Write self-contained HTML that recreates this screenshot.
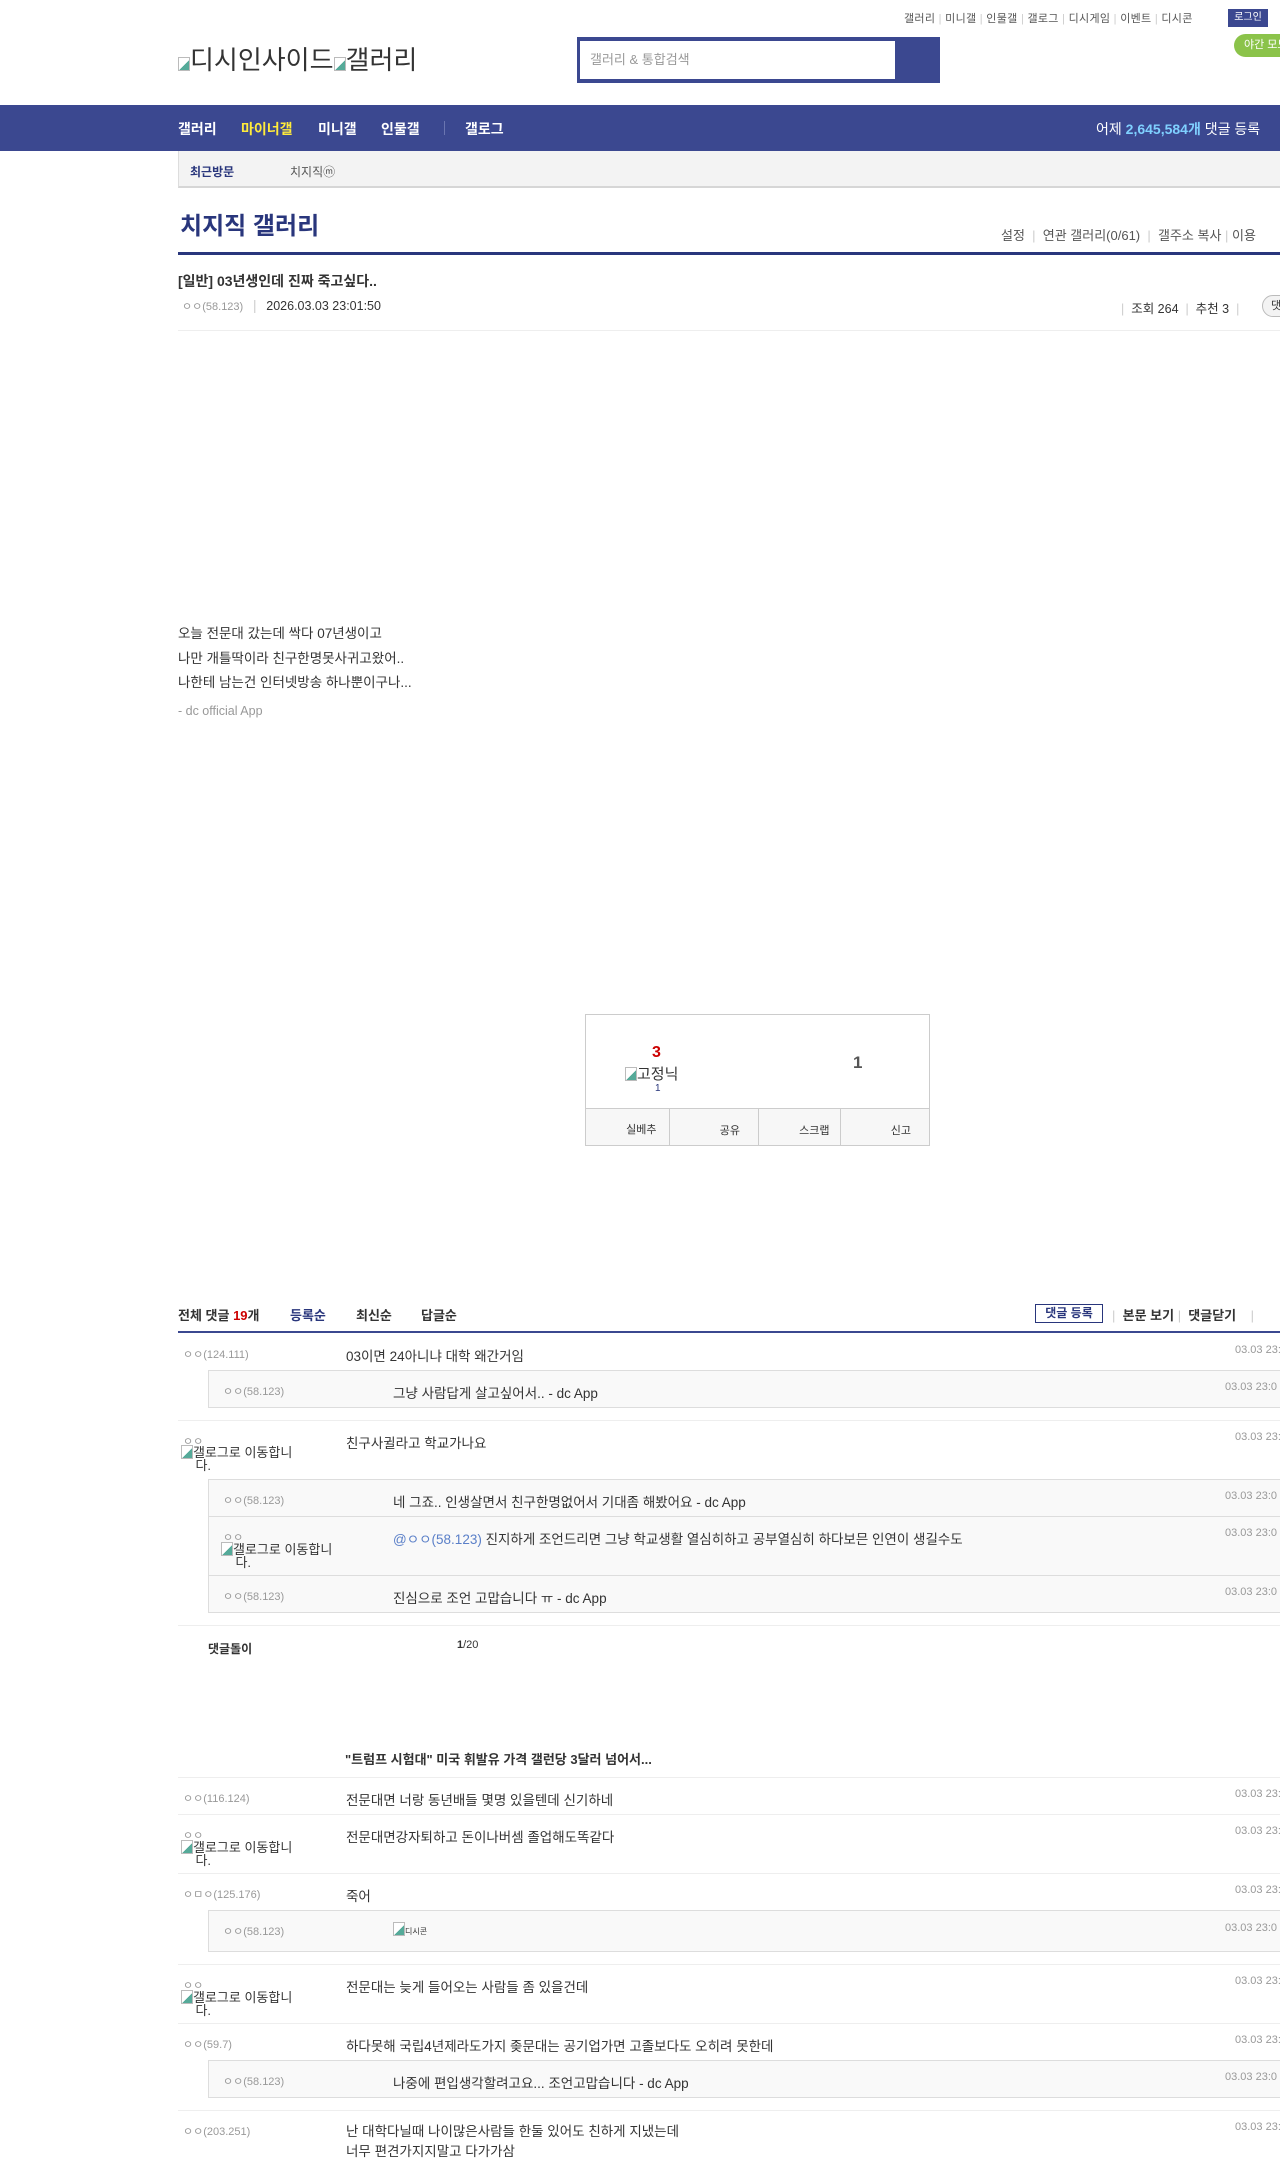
<!DOCTYPE html>
<html><head><meta charset="utf-8"><style>
*{margin:0;padding:0;box-sizing:border-box}
body{width:1280px;height:2158px;overflow:hidden;position:relative;background:#fff;font-family:"Liberation Sans","Noto Sans CJK KR",sans-serif;color:#333;font-size:13.5px}
.a{position:absolute;white-space:nowrap}
.g{color:#999;font-size:11px}
.d{color:#999;font-size:11px}
.ln{position:absolute;left:178px;width:1200px;height:1px;background:#eee}
.rb{position:absolute;left:208px;width:1170px;background:#f9f9f9;border:1px solid #ddd}
.bi{display:inline-block;width:12px;height:14px;border:1px solid #bbb;vertical-align:-2px;background:linear-gradient(135deg,#fff 55%,#5a9 56%)}
</style></head><body>
<div class="a" style="top:10px;left:904px;font-size:11px;color:#555;letter-spacing:0.3px">갤러리 <span style="color:#ccc">|</span> 미니갤 <span style="color:#ccc">|</span> 인물갤 <span style="color:#ccc">|</span> 갤로그 <span style="color:#ccc">|</span> 디시게임 <span style="color:#ccc">|</span> 이벤트 <span style="color:#ccc">|</span> 디시콘</div>
<div class="a" style="top:9px;left:1228px;width:40px;height:18px;background:#3b4890;color:#fff;font-size:10px;text-align:center;line-height:18px">로그인</div>
<div class="a" style="top:34px;left:1234px;width:60px;height:23px;background:#8bc34a;border-radius:12px;color:#fff;font-size:11px;line-height:23px;padding-left:10px">야간 모드</div>
<div class="a" style="top:40px;left:178px;font-size:26px;color:#333"><span class="bi"></span>디시인사이드<span class="bi"></span>갤러리</div>
<div class="a" style="top:37px;left:577px;width:363px;height:46px;background:#3b4890"></div>
<div class="a" style="top:41px;left:580px;width:315px;height:38px;background:#fff;color:#999;font-size:13px;line-height:38px;padding-left:10px">갤러리 &amp; 통합검색</div>
<div class="a" style="top:105px;left:0;width:1280px;height:46px;background:#3b4890"></div>
<div class="a" style="top:119px;left:178px;font-size:14px;font-weight:bold;color:#fff">갤러리</div>
<div class="a" style="top:119px;left:241px;font-size:14px;font-weight:bold;color:#ffeb3b">마이너갤</div>
<div class="a" style="top:119px;left:318px;font-size:14px;font-weight:bold;color:#fff">미니갤</div>
<div class="a" style="top:119px;left:381px;font-size:14px;font-weight:bold;color:#fff">인물갤</div>
<div class="a" style="top:121px;left:444px;width:1px;height:14px;background:#6a75b0"></div>
<div class="a" style="top:119px;left:465px;font-size:14px;font-weight:bold;color:#fff">갤로그</div>
<div class="a" style="top:119px;left:1096px;font-size:14px;color:#fff">어제 <b style="color:#7fd0ff">2,645,584개</b> 댓글 등록</div>
<div class="a" style="top:151px;left:178px;width:1200px;height:37px;background:#f3f3f3;border-bottom:2px solid #d6d6d6;border-left:1px solid #ddd"></div>
<div class="a" style="top:163px;left:190px;font-size:12px;font-weight:bold;color:#29367c">최근방문</div>
<div class="a" style="top:163px;left:290px;font-size:12px;color:#555">치지직ⓜ</div>
<div class="a" style="top:206px;left:180px;font-size:24px;font-weight:bold;color:#29367c">치지직 갤러리</div>
<div class="a" style="top:225px;left:1001px;font-size:13px;color:#555">설정 <span style="color:#ccc">&nbsp;|&nbsp;</span> 연관 갤러리(0/61) <span style="color:#ccc">&nbsp;|&nbsp;</span> 갤주소 복사 <span style="color:#ccc">|</span> 이용</div>
<div class="a" style="top:252px;left:178px;width:1200px;height:3px;background:#29367c"></div>
<div class="a" style="top:271px;left:178px;font-size:14px;font-weight:bold;color:#333">[일반] 03년생인데 진짜 죽고싶다..</div>
<div class="a" style="top:298px;left:182px"><span class="g">ㅇㅇ(58.123)</span> <span style="color:#ccc;margin:0 6px">|</span> <span style="font-size:12.5px">2026.03.03 23:01:50</span></div>
<div class="a" style="top:298px;left:1121px;font-size:12.5px"><span style="color:#ccc">|</span>&nbsp; 조회 264 &nbsp;<span style="color:#ccc">|</span>&nbsp; 추천 3 &nbsp;<span style="color:#ccc">|</span></div>
<div class="a" style="top:295px;left:1262px;width:30px;height:22px;border:1px solid #bbb;border-radius:11px;background:#f3f3f3;font-size:11px;padding-left:8px;line-height:20px">댓</div>
<div class="ln" style="top:330px"></div>
<div class="a" style="top:622px;left:178px;font-size:13.5px;line-height:24.5px">오늘 전문대 갔는데 싹다 07년생이고<br>나만 개틀딱이라 친구한명못사귀고왔어..<br>나한테 남는건 인터넷방송 하나뿐이구나...</div>
<div class="a" style="top:704px;left:178px;font-size:12.5px;color:#999">- dc official App</div>
<div class="a" style="top:1014px;left:585px;width:345px;height:132px;border:1px solid #ccc;background:#fff"></div>
<div class="a" style="top:1044px;left:652px;font-size:16px;font-weight:bold;color:#c00">3</div>
<div class="a" style="top:1063px;left:625px;font-size:15px;color:#333"><span class="bi"></span>고정닉</div>
<div class="a" style="top:1083px;left:655px;font-size:10px;color:#29367c">1</div>
<div class="a" style="top:1053px;left:853px;font-size:17px;font-weight:bold;color:#555">1</div>
<div class="a" style="top:1108px;left:585px;width:345px;height:38px;background:#f7f7f7;border:1px solid #ccc;display:flex">
<div style="flex:1;border-right:1px solid #ccc;font-size:11px;text-align:right;padding:12px 12px 0 0">실베추</div>
<div style="flex:1;border-right:1px solid #ccc;font-size:11px;text-align:right;padding:13px 18px 0 0">공유</div>
<div style="flex:1;border-right:1px solid #ccc;font-size:11px;text-align:right;padding:13px 10px 0 0">스크랩</div>
<div style="flex:1;font-size:11px;text-align:right;padding:13px 18px 0 0">신고</div></div>
<div class="a" style="top:1305px;left:178px;font-size:13px;font-weight:bold">전체 댓글 <span style="color:#c00">19</span>개</div>
<div class="a" style="top:1305px;left:290px;font-size:13px;font-weight:bold;color:#29367c">등록순</div>
<div class="a" style="top:1305px;left:356px;font-size:13px;font-weight:bold">최신순</div>
<div class="a" style="top:1305px;left:421px;font-size:13px;font-weight:bold">답글순</div>
<div class="a" style="top:1304px;left:1035px;width:68px;height:19px;border:1px solid #29367c;font-size:12px;font-weight:bold;color:#29367c;text-align:center;line-height:17px">댓글 등록</div>
<div class="a" style="top:1305px;left:1112px;font-size:13px;font-weight:bold"><span style="color:#ccc;font-weight:normal">|</span>&nbsp; 본문 보기 <span style="color:#ccc;font-weight:normal">|</span>&nbsp; 댓글닫기 &nbsp;&nbsp;&nbsp;<span style="color:#ccc;font-weight:normal">|</span></div>
<div class="a" style="top:1331px;left:178px;width:1200px;height:2px;background:#3b4890"></div>
<div class="a g" style="top:1346px;left:183px">ㅇㅇ(124.111)</div>
<div class="a" style="top:1345px;left:346px">03이면 24아니냐 대학 왜간거임</div>
<div class="a d" style="top:1344px;left:1235px">03.03 23:0</div>
<div class="rb" style="top:1370px;height:38px"></div>
<div class="a g" style="top:1383px;left:223px">ㅇㅇ(58.123)</div>
<div class="a" style="top:1382px;left:393px">그냥 사람답게 살고싶어서.. - dc App</div>
<div class="a d" style="top:1381px;left:1225px">03.03 23:0</div>
<div class="ln" style="top:1420px"></div>
<div class="a g" style="top:1433px;left:183px">ㅇㅇ</div>
<div class="a" style="top:1445px;left:181px;font-size:13px;line-height:13px"><span class="bi"></span>갤로그로 이동합니<br>&nbsp;&nbsp;&nbsp;&nbsp;다.</div>
<div class="a" style="top:1432px;left:346px">친구사귈라고 학교가나요</div>
<div class="a d" style="top:1431px;left:1235px">03.03 23:0</div>
<div class="rb" style="top:1479px;height:134px"></div>
<div class="a" style="top:1516px;left:209px;width:1170px;height:1px;background:#ddd"></div>
<div class="a" style="top:1575px;left:209px;width:1170px;height:1px;background:#ddd"></div>
<div class="a g" style="top:1492px;left:223px">ㅇㅇ(58.123)</div>
<div class="a" style="top:1491px;left:393px">네 그죠.. 인생살면서 친구한명없어서 기대좀 해봤어요 - dc App</div>
<div class="a d" style="top:1490px;left:1225px">03.03 23:0</div>
<div class="a g" style="top:1529px;left:223px">ㅇㅇ</div>
<div class="a" style="top:1542px;left:221px;font-size:13px;line-height:13px"><span class="bi"></span>갤로그로 이동합니<br>&nbsp;&nbsp;&nbsp;&nbsp;다.</div>
<div class="a" style="top:1528px;left:393px"><span style="color:#5a7fc8">@ㅇㅇ(58.123)</span> 진지하게 조언드리면 그냥 학교생활 열심히하고 공부열심히 하다보믄 인연이 생길수도</div>
<div class="a d" style="top:1527px;left:1225px">03.03 23:0</div>
<div class="a g" style="top:1588px;left:223px">ㅇㅇ(58.123)</div>
<div class="a" style="top:1587px;left:393px">진심으로 조언 고맙습니다 ㅠ - dc App</div>
<div class="a d" style="top:1586px;left:1225px">03.03 23:0</div>
<div class="ln" style="top:1625px"></div>
<div class="a" style="top:1640px;left:208px;font-size:12px;font-weight:bold">댓글돌이</div>
<div class="a" style="top:1639px;left:457px;font-size:11px"><b>1</b>/20</div>
<div class="a" style="top:1749px;left:345px;font-size:13px;font-weight:bold">"트럼프 시험대" 미국 휘발유 가격 갤런당 3달러 넘어서...</div>
<div class="ln" style="top:1777px"></div>
<div class="a g" style="top:1790px;left:183px">ㅇㅇ(116.124)</div>
<div class="a" style="top:1789px;left:346px">전문대면 너랑 동년배들 몇명 있을텐데 신기하네</div>
<div class="a d" style="top:1788px;left:1235px">03.03 23:0</div>
<div class="ln" style="top:1814px"></div>
<div class="a g" style="top:1827px;left:183px">ㅇㅇ</div>
<div class="a" style="top:1840px;left:181px;font-size:13px;line-height:13px"><span class="bi"></span>갤로그로 이동합니<br>&nbsp;&nbsp;&nbsp;&nbsp;다.</div>
<div class="a" style="top:1826px;left:346px">전문대면강자퇴하고 돈이나버셈 졸업해도똑같다</div>
<div class="a d" style="top:1825px;left:1235px">03.03 23:0</div>
<div class="ln" style="top:1873px"></div>
<div class="a g" style="top:1886px;left:183px">ㅇㅁㅇ(125.176)</div>
<div class="a" style="top:1885px;left:346px">죽어</div>
<div class="a d" style="top:1884px;left:1235px">03.03 23:0</div>
<div class="rb" style="top:1910px;height:42px"></div>
<div class="a g" style="top:1923px;left:223px">ㅇㅇ(58.123)</div>
<div class="a" style="top:1922px;left:393px;font-size:8px"><span class="bi"></span>디시콘</div>
<div class="a d" style="top:1922px;left:1225px">03.03 23:0</div>
<div class="ln" style="top:1964px"></div>
<div class="a g" style="top:1977px;left:183px">ㅇㅇ</div>
<div class="a" style="top:1990px;left:181px;font-size:13px;line-height:13px"><span class="bi"></span>갤로그로 이동합니<br>&nbsp;&nbsp;&nbsp;&nbsp;다.</div>
<div class="a" style="top:1976px;left:346px">전문대는 늦게 들어오는 사람들 좀 있을건데</div>
<div class="a d" style="top:1975px;left:1235px">03.03 23:0</div>
<div class="ln" style="top:2023px"></div>
<div class="a g" style="top:2036px;left:183px">ㅇㅇ(59.7)</div>
<div class="a" style="top:2035px;left:346px">하다못해 국립4년제라도가지 좆문대는 공기업가면 고졸보다도 오히려 못한데</div>
<div class="a d" style="top:2034px;left:1235px">03.03 23:0</div>
<div class="rb" style="top:2060px;height:38px"></div>
<div class="a g" style="top:2073px;left:223px">ㅇㅇ(58.123)</div>
<div class="a" style="top:2072px;left:393px">나중에 편입생각할려고요... 조언고맙습니다 - dc App</div>
<div class="a d" style="top:2071px;left:1225px">03.03 23:0</div>
<div class="ln" style="top:2110px"></div>
<div class="a g" style="top:2123px;left:183px">ㅇㅇ(203.251)</div>
<div class="a" style="top:2122px;left:346px;line-height:20px">난 대학다닐때 나이많은사람들 한둘 있어도 친하게 지냈는데<br>너무 편견가지지말고 다가가삼</div>
<div class="a d" style="top:2121px;left:1235px">03.03 23:0</div>
</body></html>
